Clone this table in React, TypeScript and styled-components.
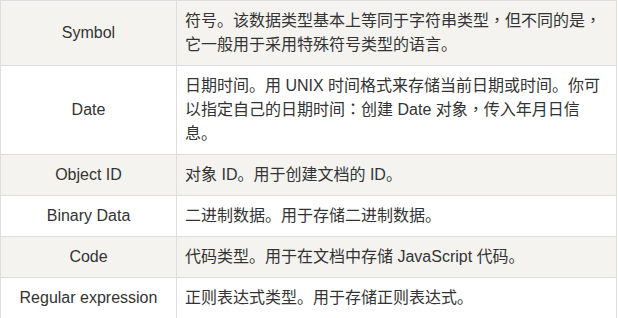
import React from "react";
import styled, {createGlobalStyle} from "styled-components";

const GlobalStyle = createGlobalStyle`
  body {
    margin: 0;
    background: #fff;
    font-family: "Liberation Sans", "Noto Sans CJK SC", sans-serif;
  }
`;

const rows: {type: string; desc: string}[] = [
  {type: "Symbol", desc: "符号。该数据类型基本上等同于字符串类型，但不同的是，它一般用于采用特殊符号类型的语言。"},
  {type: "Date", desc: "日期时间。用 UNIX 时间格式来存储当前日期或时间。你可以指定自己的日期时间：创建 Date 对象，传入年月日信息。"},
  {type: "Object ID", desc: "对象 ID。用于创建文档的 ID。"},
  {type: "Binary Data", desc: "二进制数据。用于存储二进制数据。"},
  {type: "Code", desc: "代码类型。用于在文档中存储 JavaScript 代码。"},
  {type: "Regular expression", desc: "正则表达式类型。用于存储正则表达式。"},
];

// full-width comma and colon sit centred in the reference font
const renderDesc = (text: string) =>
  text.split(/([，：])/).map((part, i) =>
    part === "，" || part === "：" ? <Punct key={i}>{part}</Punct> : part
  );

export default function App() {
  return (
    <>
      <GlobalStyle />
      <Table>
        <colgroup>
          <TypeCol />
          <col />
        </colgroup>
        <tbody>
          {rows.map((row, i) => (
            <Row key={row.type} shaded={i % 2 === 0}>
              <TypeCell>{row.type}</TypeCell>
              <DescCell>{renderDesc(row.desc)}</DescCell>
            </Row>
          ))}
        </tbody>
      </Table>
    </>
  );
}

const Table = styled.table`
  width: 617px;
  table-layout: fixed;
  border-collapse: collapse;
  font-size: 16px;
  line-height: 24px;
  color: #333;
`;

const TypeCol = styled.col`
  width: 176px;
`;

const Row = styled.tr<{shaded: boolean}>`
  background-color: ${({shaded}) => (shaded ? "#f4f3f0" : "#fff")};
`;

const TypeCell = styled.td`
  border: 1px solid #ddd;
  padding: 8px;
  text-align: center;
  vertical-align: middle;
`;

const DescCell = styled.td`
  border: 1px solid #ddd;
  padding: 8px;
  text-align: left;
  vertical-align: middle;
`;

const Punct = styled.span`
  font-family: "Noto Sans CJK TC", sans-serif;
  line-height: 1;
`;
